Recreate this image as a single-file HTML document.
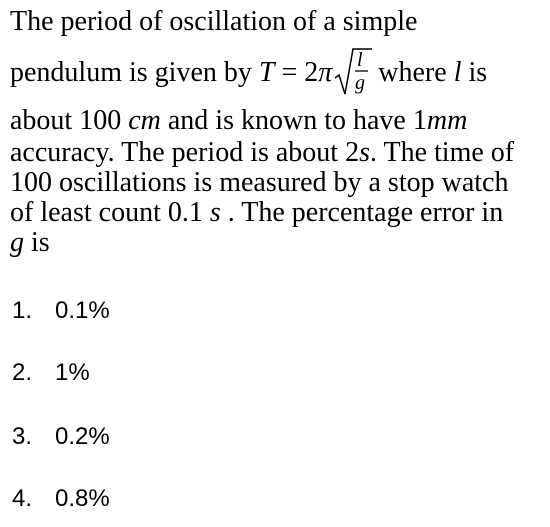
<!DOCTYPE html>
<html><head><style>
body{margin:0;width:550px;height:527px;background:#fff;position:relative;overflow:hidden;font-family:"Liberation Serif",serif;color:#000}
.l{position:absolute;left:10px;font-size:28px;white-space:nowrap;line-height:1}
.o{position:absolute;left:12px;font-family:"Liberation Sans",sans-serif;font-size:24px;white-space:nowrap}
.o span{position:absolute;left:43px}
i{font-style:italic}
.sq{display:inline-block;position:relative;width:46px;height:20px}
.sq svg{position:absolute;left:2px;top:-14px}
</style></head><body>
<div class="l" style="top:8px">The period of oscillation of a simple</div>
<div class="l" style="top:59px">pendulum is given by <i>T</i> = 2<i>π</i><span class="sq"><svg width="40" height="50">
<path d="M1 31 L5 28 L11 47 L19 2 L38 2" fill="none" stroke="#000" stroke-width="1.5"/>
<text x="23" y="19" font-family="Liberation Serif" font-style="italic" font-size="20">l</text>
<line x1="21" y1="24" x2="34" y2="24" stroke="#000" stroke-width="1.3"/>
<text x="21" y="42" font-family="Liberation Serif" font-style="italic" font-size="20">g</text>
</svg></span>where <i>l</i> is</div>
<div class="l" style="top:107px">about 100 <i>cm</i> and is known to have 1<i>mm</i></div>
<div class="l" style="top:139px">accuracy. The period is about 2<i>s</i>. The time of</div>
<div class="l" style="top:169px">100 oscillations is measured by a stop watch</div>
<div class="l" style="top:199px">of least count 0.1 <i>s</i> . The percentage error in</div>
<div class="l" style="top:229px"><i>g</i> is</div>
<div class="o" style="top:297px">1.<span>0.1%</span></div>
<div class="o" style="top:359px">2.<span>1%</span></div>
<div class="o" style="top:423px">3.<span>0.2%</span></div>
<div class="o" style="top:485px">4.<span>0.8%</span></div>
</body></html>
